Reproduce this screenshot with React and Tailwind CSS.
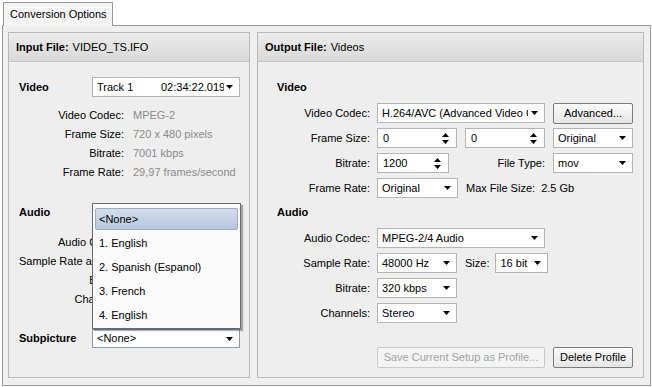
import React from 'react';

const Arrow = () => (
  <svg width="7" height="4" viewBox="0 0 7 4" className="shrink-0">
    <path d="M0 0H7L3.5 4Z" fill="#000" />
  </svg>
);

const Spin = () => (
  <div className="flex flex-col gap-[3px] shrink-0">
    <svg width="7" height="4" viewBox="0 0 7 4"><path d="M0 4H7L3.5 0Z" fill="#000" /></svg>
    <svg width="7" height="4" viewBox="0 0 7 4"><path d="M0 0H7L3.5 4Z" fill="#000" /></svg>
  </div>
);

function Select({ value, w, focus }) {
  return (
    <div
      className={`${w} h-[20px] bg-white border ${focus ? 'border-[#7f9db9]' : 'border-[#b4b4b4]'} flex items-center pl-[4px] pr-[6px] shrink-0`}
    >
      <span className="flex-1 overflow-hidden whitespace-nowrap mr-[3px]">{value}</span>
      <Arrow />
    </div>
  );
}

function SpinBox({ value, w }) {
  return (
    <div className={`${w} h-[20px] bg-white border border-[#b4b4b4] flex items-center pl-[5px] pr-[7px] shrink-0`}>
      <span className="flex-1">{value}</span>
      <Spin />
    </div>
  );
}

function Button({ children, w, disabled }) {
  return (
    <div
      className={`${w} h-[21px] rounded-[2px] border flex items-center justify-center shrink-0 whitespace-nowrap ${
        disabled
          ? 'border-[#cacaca] bg-[#f4f4f4] text-[#a3a3a3]'
          : 'border-[#7b7b7b] bg-gradient-to-b from-[#fbfbfb] to-[#e6e6e6]'
      }`}
    >
      {children}
    </div>
  );
}

function Panel({ title, value, w, children }) {
  return (
    <div className={`${w} h-[346px] border border-[#bababa] bg-[#eeeeee] flex flex-col`}>
      <div className="h-[29px] shrink-0 border-b border-[#c4c4c4] bg-gradient-to-b from-[#ececec] to-[#d9d9d9] flex items-center px-[7px]">
        <span className="font-bold">{title}</span>
        <span className="ml-[4px]">{value}</span>
      </div>
      {children}
    </div>
  );
}

const InfoRow = ({ label, value }) => (
  <div className="h-[19px] flex items-center">
    <span className="w-[105px] text-right whitespace-nowrap">{label}</span>
    {value && <span className="ml-[9px] text-[#8b8b8b] whitespace-nowrap">{value}</span>}
  </div>
);

const Row = ({ label, children }) => (
  <div className="h-[20px] flex items-center">
    <span className="w-[93px] text-right whitespace-nowrap">{label}</span>
    <div className="ml-[7px] flex items-center gap-[8px]">{children}</div>
  </div>
);

const tracks = ['<None>', '1. English', '2. Spanish (Espanol)', '3. French', '4. English'];

export default function App() {
  return (
    <div className="w-[652px] h-[387px] bg-white overflow-hidden font-['Liberation_Sans',Arial,sans-serif] text-[11px] text-black">
      <div className="h-[25px] pl-[3px] pt-[2px] flex">
        <div className="relative z-10 w-[110px] h-[24px] border border-b-0 border-[#919b9c] bg-[#f5f5f5] flex items-center pl-[6px]">
          Conversion Options
        </div>
      </div>
      <div className="ml-[2px] w-[649px] h-[361px] border border-[#919b9c] bg-[#efefef] pt-[6px] pl-[5px] flex gap-[7px]">
        <Panel w="w-[242px]" title="Input File:" value="VIDEO_TS.IFO">
          <div className="pl-[10px] flex flex-col">
            <div className="mt-[15px] h-[20px] flex items-center">
              <span className="w-[73px] font-bold">Video</span>
              <div className="w-[148px] h-[20px] bg-white border border-[#b4b4b4] flex items-center pl-[4px] pr-[6px]">
                <span className="w-[64px] shrink-0">Track 1</span>
                <span className="flex-1 overflow-hidden whitespace-nowrap mr-[2px]">02:34:22.019</span>
                <Arrow />
              </div>
            </div>
            <div className="mt-[9px] flex flex-col">
              <InfoRow label="Video Codec:" value="MPEG-2" />
              <InfoRow label="Frame Size:" value="720 x 480 pixels" />
              <InfoRow label="Bitrate:" value="7001 kbps" />
              <InfoRow label="Frame Rate:" value="29,97 frames/second" />
            </div>
            <div className="mt-[21px] h-[19px] flex items-center font-bold">Audio</div>
            <div className="mt-[11px] flex flex-col">
              <InfoRow label="Audio Codec:" />
              <InfoRow label="Sample Rate and Size:" />
              <InfoRow label="Bitrate:" />
              <InfoRow label="Channels:" />
            </div>
            <div className="mt-[20px] h-[19px] flex items-center">
              <span className="w-[73px] font-bold">Subpicture</span>
              <div className="relative">
                <div className="absolute left-0 bottom-full w-[149px] h-[126px] border border-[#6b6b6b] bg-[#fafafa] shadow-[2px_2px_1px_rgba(0,0,0,0.3)] pt-[3px] px-[2px] flex flex-col">
                  {tracks.map((t, i) => (
                    <div key={i} className="h-[24px] shrink-0 flex items-center py-[1px]">
                      <div
                        className={`w-full h-full flex items-center pl-[3px] ${
                          i === 0
                            ? 'border border-[#9aaecb] rounded-[2px] bg-gradient-to-b from-[#d3ddec] to-[#b7c6dc]'
                            : 'border border-transparent'
                        }`}
                      >
                        {t}
                      </div>
                    </div>
                  ))}
                </div>
                <div className="w-[148px] h-[19px] bg-white border border-[#7f9db9] flex items-center pl-[4px] pr-[6px]">
                  <span className="flex-1">&lt;None&gt;</span>
                  <Arrow />
                </div>
              </div>
            </div>
          </div>
        </Panel>
        <Panel w="w-[387px]" title="Output File:" value="Videos">
          <div className="pl-[19px] flex flex-col">
            <div className="mt-[16px] h-[19px] flex items-center font-bold">Video</div>
            <div className="mt-[6px] flex flex-col gap-[5px]">
              <Row label="Video Codec:">
                <Select w="w-[168px]" value="H.264/AVC (Advanced Video Coding)" />
                <Button w="w-[80px]">Advanced...</Button>
              </Row>
              <Row label="Frame Size:">
                <SpinBox w="w-[80px]" value="0" />
                <SpinBox w="w-[80px]" value="0" />
                <Select w="w-[80px]" value="Original" />
              </Row>
              <Row label="Bitrate:">
                <SpinBox w="w-[72px]" value="1200" />
                <span className="w-[88px] text-right">File Type:</span>
                <Select w="w-[80px]" value="mov" />
              </Row>
              <Row label="Frame Rate:">
                <Select w="w-[81px]" value="Original" />
                <span className="whitespace-pre">Max File Size:  2.5 Gb</span>
              </Row>
            </div>
            <div className="mt-[5px] h-[19px] flex items-center font-bold">Audio</div>
            <div className="mt-[6px] flex flex-col gap-[5px]">
              <Row label="Audio Codec:">
                <Select w="w-[168px]" value="MPEG-2/4 Audio" />
              </Row>
              <Row label="Sample Rate:">
                <Select w="w-[80px]" value="48000 Hz" />
                <div className="flex items-center gap-[6px]">
                  <span>Size:</span>
                  <Select w="w-[53px]" value="16 bit" />
                </div>
              </Row>
              <Row label="Bitrate:">
                <Select w="w-[80px]" value="320 kbps" />
              </Row>
              <Row label="Channels:">
                <Select w="w-[80px]" value="Stereo" />
              </Row>
            </div>
            <div className="mt-[24px] ml-[100px] flex gap-[8px]">
              <Button w="w-[168px]" disabled>Save Current Setup as Profile...</Button>
              <Button w="w-[80px]">Delete Profile</Button>
            </div>
          </div>
        </Panel>
      </div>
    </div>
  );
}
